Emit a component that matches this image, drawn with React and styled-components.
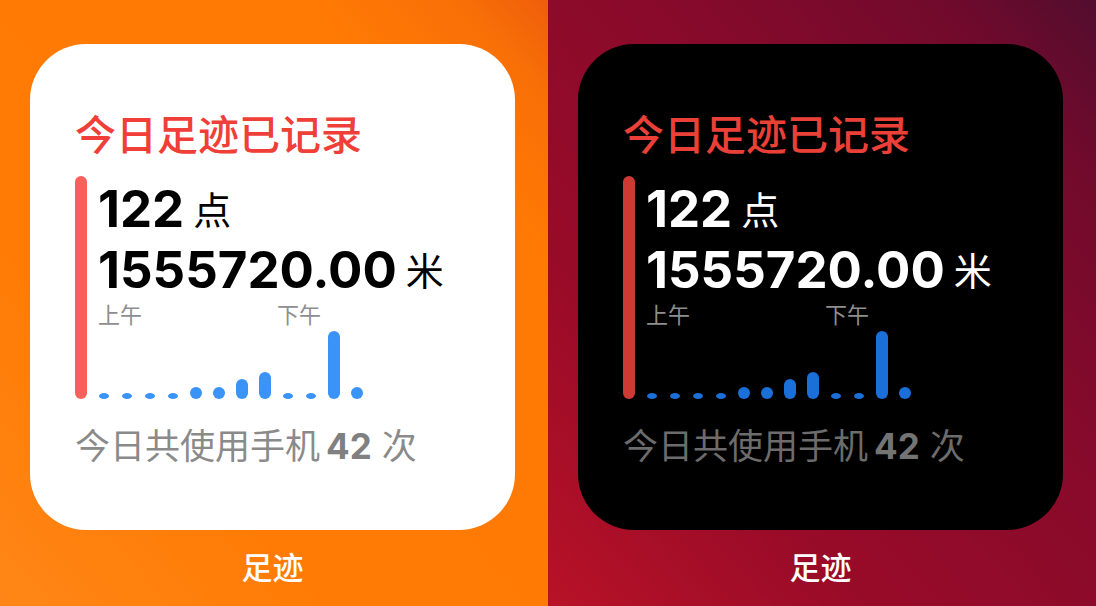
import styled, { createGlobalStyle } from "styled-components";

const GlobalStyle = createGlobalStyle`
  html, body {
    margin: 0;
    padding: 0;
    background: #000;
  }
  body {
    font-family: Inter, "Noto Sans CJK SC", sans-serif;
  }
`;

const Screen = styled.div`
  display: flex;
  width: 1096px;
  height: 606px;
  overflow: hidden;
`;

const Panel = styled.div`
  width: 548px;
  height: 606px;
  display: flex;
  flex-direction: column;
  padding: 44px 0 0 30px;
  box-sizing: border-box;
  background: ${(p) =>
    p.$dark
      ? "linear-gradient(to bottom left, #520d2e 0%, #700a2c 14%, #880a2b 40%, #990b28 72%, #b81227 100%)"
      : "linear-gradient(to bottom left, #ef5e0b 0%, #f86f07 8%, #ff7a04 22%, #ff7b05 70%, #ff8616 100%)"};
`;

const Card = styled.div`
  width: 485px;
  height: 486px;
  box-sizing: border-box;
  border-radius: 56px;
  padding: 68px 0 0 45px;
  display: flex;
  flex-direction: column;
  background: ${(p) => (p.$dark ? "#000" : "#fff")};
`;

const Title = styled.div`
  font-family: "Noto Sans CJK SC", sans-serif;
  font-size: 41px;
  line-height: 41px;
  font-weight: 500;
  color: ${(p) => (p.$dark ? "#ea4038" : "#f03f38")};
`;

const Body = styled.div`
  display: flex;
  gap: 11px;
  margin-top: 23px;
`;

const Accent = styled.div`
  width: 12px;
  border-radius: 6px;
  background: ${(p) => (p.$dark ? "#cc3a33" : "#f6615c")};
`;

const Column = styled.div`
  display: flex;
  flex-direction: column;
  padding-top: 2px;
`;

const Stat = styled.div`
  font-size: 51px;
  line-height: 61px;
  font-weight: 700;
  color: ${(p) => (p.$dark ? "#fff" : "#000")};
`;

const Unit = styled.span`
  font-family: "Noto Sans CJK SC", sans-serif;
  font-size: 38px;
  line-height: 1;
  font-weight: 400;
  margin-left: 9px;
  vertical-align: 3px;
`;

const Periods = styled.div`
  display: flex;
  margin-top: 2px;
  font-family: "Noto Sans CJK SC", sans-serif;
  font-size: 22px;
  line-height: 22px;
  color: #8e8e8e;
`;

const Period = styled.span`
  margin-left: ${(p) => p.$offset || 0}px;
`;

const Bars = styled.div`
  display: flex;
  align-items: flex-end;
  gap: 11px;
  height: 68px;
  margin-top: 7px;
`;

const Slot = styled.div`
  width: 12px;
  display: flex;
  justify-content: center;
`;

const Bar = styled.div`
  width: ${(p) => (p.$h < 12 ? 10 : 12)}px;
  height: ${(p) => p.$h}px;
  border-radius: ${(p) => (p.$h < 12 ? "50%" : "6px")};
  background: ${(p) => (p.$dark ? "#1b6fd8" : "#3a93f6")};
`;

const Footer = styled.div`
  margin-top: 27px;
  font-family: "Noto Sans CJK SC", sans-serif;
  font-size: 35px;
  line-height: 35px;
  color: ${(p) => (p.$dark ? "#6c6c6c" : "#8a8a8a")};
`;

const Count = styled.span`
  font-family: Inter, sans-serif;
  font-weight: 700;
  margin: 0 10px 0 6px;
  color: ${(p) => (p.$dark ? "#747474" : "#808080")};
`;

const Label = styled.div`
  width: 485px;
  margin-top: 20px;
  text-align: center;
  font-family: "Noto Sans CJK SC", sans-serif;
  font-size: 31px;
  line-height: 31px;
  font-weight: 500;
  color: #fff;
`;

const usage = [6, 6, 6, 6, 12, 12, 20, 27, 6, 6, 68, 12];

const Widget = ({ dark }) => (
  <Panel $dark={dark}>
    <Card $dark={dark}>
      <Title $dark={dark}>今日足迹已记录</Title>
      <Body>
        <Accent $dark={dark} />
        <Column>
          <Stat $dark={dark}>
            122<Unit>点</Unit>
          </Stat>
          <Stat $dark={dark}>
            1555720.00<Unit>米</Unit>
          </Stat>
          <Periods>
            <Period>上午</Period>
            <Period $offset={135}>下午</Period>
          </Periods>
          <Bars>
            {usage.map((h, i) => (
              <Slot key={i}>
                <Bar $h={h} $dark={dark} />
              </Slot>
            ))}
          </Bars>
        </Column>
      </Body>
      <Footer $dark={dark}>
        今日共使用手机<Count $dark={dark}>42</Count>次
      </Footer>
    </Card>
    <Label>足迹</Label>
  </Panel>
);

export default function App() {
  return (
    <>
      <GlobalStyle />
      <Screen>
        <Widget />
        <Widget dark />
      </Screen>
    </>
  );
}
